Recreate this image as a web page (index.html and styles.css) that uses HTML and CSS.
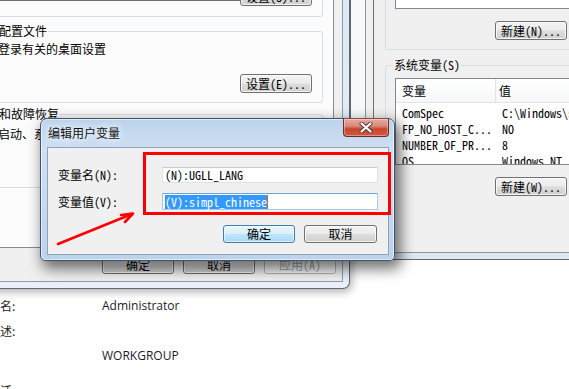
FILE: index.html
```html
<!DOCTYPE html>
<html lang="zh-CN">
<head>
<meta charset="utf-8">
<title>编辑用户变量</title>
<link rel="stylesheet" href="styles.css">
</head>
<body>
<div class="desk">

  <section class="syspage">
    <div class="info-row"><span class="info-label">名:</span><span class="info-val">Administrator</span></div>
    <div class="info-row"><span class="info-label">述:</span><span class="info-val"></span></div>
    <div class="info-row"><span class="info-label"></span><span class="info-val">WORKGROUP</span></div>
    <div class="info-row last"><span class="info-label">活</span><span class="info-val"></span></div>
  </section>

  <div class="win sysprops">
    <div class="sp-client">
      <div class="tabpage sim">
        <fieldset class="grp grp1">
          <div class="grp1-rule"></div>
          <div class="btn w72">设置(S)...</div>
        </fieldset>
        <fieldset class="grp grp2">
          <legend>用户配置文件</legend>
          <p class="grp-text">与您登录有关的桌面设置</p>
          <div class="btn w72 push-right">设置(E)...</div>
        </fieldset>
        <fieldset class="grp grp3">
          <legend>启动和故障恢复</legend>
          <p class="grp-text">系统启动、系统失败和调试信息</p>
        </fieldset>
      </div>
      <div class="sp-buttons sim">
        <div class="btn w72">确定</div>
        <div class="btn w72">取消</div>
        <div class="btn w72 disabled">应用(A)</div>
      </div>
    </div>
  </div>

  <div class="win envvars">
    <div class="ev-client sim">
      <fieldset class="grp ev-user">
        <div class="listbox user-list"></div>
        <div class="ev-buttons">
          <div class="btn w72">新建(N)...</div>
          <div class="btn w72">编辑(E)...</div>
          <div class="btn w72">删除(D)</div>
        </div>
      </fieldset>
      <fieldset class="grp ev-sys">
        <legend>系统变量(S)</legend>
        <div class="listbox sys-list">
          <div class="lv-head"><span class="col1">变量</span><span class="col2">值</span></div>
          <div class="lv-row"><span class="col1">ComSpec</span><span class="col2">C:\Windows\system32\cmd.exe</span></div>
          <div class="lv-row"><span class="col1">FP_NO_HOST_C...</span><span class="col2">NO</span></div>
          <div class="lv-row"><span class="col1">NUMBER_OF_PR...</span><span class="col2">8</span></div>
          <div class="lv-row"><span class="col1">OS</span><span class="col2">Windows_NT</span></div>
        </div>
        <div class="ev-buttons">
          <div class="btn w72">新建(W)...</div>
          <div class="btn w72">编辑(I)...</div>
          <div class="btn w72">删除(L)</div>
        </div>
      </fieldset>
    </div>
  </div>

  <div class="win editdlg">
    <div class="titlebar">
      <span class="title">编辑用户变量</span>
      <div class="closebtn">
        <svg width="14" height="11" viewBox="0 0 14 11" aria-hidden="true">
          <path d="M2.5 1.5 L11.5 9.5 M11.5 1.5 L2.5 9.5" stroke="#4a3a38" stroke-width="4" stroke-linecap="round" fill="none"/>
          <path d="M2.5 1.5 L11.5 9.5 M11.5 1.5 L2.5 9.5" stroke="#ffffff" stroke-width="2.2" stroke-linecap="round" fill="none"/>
        </svg>
      </div>
    </div>
    <div class="ed-client sim">
      <div class="field-row">
        <span class="field-label">变量名(N):</span>
        <div class="input">(N):UGLL_LANG</div>
      </div>
      <div class="field-row row2">
        <span class="field-label">变量值(V):</span>
        <div class="input focus"><span class="sel">(V):simpl_chinese</span><span class="caret"></span></div>
      </div>
      <div class="ed-buttons">
        <div class="btn w72 default">确定</div>
        <div class="btn w73">取消</div>
      </div>
    </div>
  </div>

  <div class="annot-box"></div>
  <svg class="annot-arrow" width="569" height="389" viewBox="0 0 569 389" aria-hidden="true">
    <path d="M58 244 L132 214" stroke="#ff0000" stroke-width="2.6" stroke-linecap="round" fill="none"/>
    <path d="M121 215 L133 213.5 L125 222" stroke="#ff0000" stroke-width="2.6" stroke-linecap="round" stroke-linejoin="round" fill="none"/>
  </svg>

</div>
</body>
</html>
```

FILE: styles.css
```css
* { box-sizing: border-box; }
html, body { margin: 0; padding: 0; }
body {
  width: 569px;
  height: 389px;
  overflow: hidden;
  background: #ffffff;
  font-family: "Noto Sans CJK SC", sans-serif;
  font-size: 12px;
  color: #000;
}
.desk {
  position: relative;
  width: 569px;
  height: 389px;
  overflow: hidden;
  background: #ffffff;
}
.sim {
  font-family: "Noto Sans Mono CJK SC", "Noto Sans CJK SC", monospace;
  font-size: 12px;
  line-height: 14px;
}
.win { position: absolute; }

/* ---------- buttons ---------- */
.btn {
  height: 19px;
  flex-shrink: 0;
  border: 1px solid #707070;
  border-radius: 3px;
  background: linear-gradient(#f3f3f3 0%, #ebebeb 48%, #dddddd 52%, #cfcfcf 100%);
  box-shadow: inset 0 0 0 1px rgba(255,255,255,0.75);
  display: flex;
  align-items: center;
  justify-content: center;
  white-space: nowrap;
  line-height: 14px;
}
.w72 { width: 72px; }
.w73 { width: 73px; }
.btn.default {
  border-color: #3c7fb1;
  background: linear-gradient(#eaf6fd 0%, #d9f0fc 48%, #bee6fd 52%, #a7d9f5 100%);
  box-shadow: inset 0 0 0 1px rgba(255,255,255,0.6);
}
.btn.disabled {
  color: #9c9c9c;
  border-color: #adb2b5;
  background: #f4f4f4;
}

/* ---------- group boxes ---------- */
.grp {
  margin: 0;
  min-width: 0;
  border: 1px solid #d5dfe5;
  border-radius: 3px;
  padding: 0 10px 0 7px;
  flex-shrink: 0;
}
.grp legend {
  padding: 0 1px;
  font-size: 12px;
  line-height: 14px;
  white-space: nowrap;
}
.grp-text {
  margin: 0;
  white-space: nowrap;
  line-height: 14px;
}
.push-right { margin-left: auto; }

/* ---------- bottom system page ---------- */
.syspage {
  position: absolute;
  left: 0;
  top: 289px;
  width: 569px;
  height: 100px;
  padding-top: 4px;
}
.info-row {
  display: flex;
  height: 25px;
  line-height: 25px;
  white-space: nowrap;
}
.info-row.last { margin-top: 10px; }
.info-label {
  width: 102px;
  flex-shrink: 0;
  font-family: "Noto Sans CJK SC", sans-serif;
  color: #1e1e1e;
}
.info-val {
  font-family: "Open Sans", "Noto Sans", sans-serif;
  color: #1a1a2a;
}

/* ---------- system properties dialog (behind) ---------- */
.sysprops {
  left: -60px;
  top: -30px;
  width: 410px;
  height: 319px;
  background: linear-gradient(#dde8f4, #e9f0f8);
  border: 1px solid #5d6672;
  border-top: 0;
  border-radius: 0 0 7px 7px;
  padding: 0 6px 6px 6px;
  box-shadow: 2px 3px 8px rgba(0,0,0,0.3);
  display: flex;
  flex-direction: column;
}
.sp-client {
  flex: 1;
  background: #f0f0f0;
  border: 1px solid #8c9cb0;
  padding: 0 8px 7px 8px;
  display: flex;
  flex-direction: column;
}
.tabpage {
  height: 277px;
  flex-shrink: 0;
  background: #fcfcfc;
  border: 1px solid #898c95;
  padding: 0 10px 0 9px;
  display: flex;
  flex-direction: column;
}
.grp1 {
  height: 45px;
}
.grp1-rule {
  margin-top: 27px;
  width: 274px;
  height: 1px;
  background: #6f6f6f;
}
.grp1 .btn {
  margin: -14px 0 0 auto;
}
.grp2 {
  margin-top: 7px;
  height: 79px;
}
.grp2 .grp-text { margin-top: 4px; }
.grp2 .btn { margin-top: 18px; }
.grp3 {
  margin-top: 4px;
  height: 81px;
}
.grp3 .grp-text { margin-top: 6px; }
.sp-buttons {
  display: flex;
  justify-content: flex-end;
  gap: 9px;
  margin-top: 7px;
  margin-right: -2px;
}

/* ---------- environment variables dialog ---------- */
.envvars {
  left: 350px;
  top: -20px;
  width: 410px;
  height: 280px;
  background: linear-gradient(to right, #f6f8fb 0, #f6f8fb 14px, #dfe7f0 14px);
  border: 1px solid #5d6672;
  border-top: 0;
  padding: 0 7px 6px 14px;
  display: flex;
}
.ev-client {
  flex: 1;
  background: linear-gradient(to right, #f0f0f0 0, #f0f0f0 7px, #6e6e6e 7px, #6e6e6e 8px, #f0f0f0 8px);
  border: 1px solid #8a96a3;
  padding: 0 11px 0 19px;
  display: flex;
  flex-direction: column;
}
.ev-user {
  height: 69px;
  padding: 0 10px 0 9px;
  border-top: 0;
  border-radius: 0 0 3px 3px;
}
.listbox {
  background: #ffffff;
  border: 1px solid #828790;
  flex-shrink: 0;
}
.user-list { height: 28px; }
.ev-buttons {
  display: flex;
  justify-content: flex-end;
  gap: 9px;
  margin-top: 12px;
}
.ev-sys {
  margin-top: 8px;
  flex: 1;
  padding: 0 10px 0 9px;
  border-bottom: 0;
  border-radius: 3px 3px 0 0;
}
.ev-sys legend { margin-left: -2px; }
.sys-list {
  margin-top: 6px;
  height: 87px;
  overflow: hidden;
}
.lv-head {
  display: flex;
  height: 24px;
  align-items: center;
  background: linear-gradient(#ffffff, #f6f7f9);
  border-bottom: 1px solid #e2e4e8;
  margin-bottom: 2px;
}
.lv-head .col1 { border-right: 1px solid #e3e3e3; height: 24px; display: flex; align-items: center; }
.lv-head .col2 { padding-left: 3px; }
.lv-row {
  display: flex;
  height: 16px;
  align-items: center;
  white-space: nowrap;
}
.col1 { width: 100px; padding-left: 6px; flex-shrink: 0; }
.col2 { padding-left: 6px; white-space: nowrap; }

/* ---------- edit user variable dialog (front) ---------- */
.editdlg {
  left: 40px;
  top: 118px;
  width: 355px;
  height: 143px;
  border: 1px solid #42536b;
  border-radius: 7px 7px 5px 5px;
  background: linear-gradient(#bcd3ec 0%, #cfe0f3 22%, #c6daf0 60%, #bcd3ec 100%);
  box-shadow: inset 0 0 0 1px rgba(255,255,255,0.55), 4px 6px 14px 2px rgba(0,0,0,0.55);
  padding: 0 5px 5px 6px;
  display: flex;
  flex-direction: column;
}
.titlebar {
  height: 28px;
  flex-shrink: 0;
  display: flex;
  align-items: flex-start;
  padding-left: 1px;
}
.title {
  margin-top: 7px;
  line-height: 14px;
  font-size: 12px;
  color: #111;
  text-shadow: 0 0 6px #ffffff, 0 0 10px rgba(255,255,255,0.9);
  white-space: nowrap;
}
.closebtn {
  margin-left: auto;
  margin-top: -1px;
  width: 46px;
  height: 19px;
  border: 1px solid #6b2e26;
  border-top-color: #8a4b42;
  border-radius: 0 0 4px 4px;
  background: linear-gradient(#eaa99f 0%, #d9877a 42%, #c8452f 58%, #d2593f 100%);
  box-shadow: inset 0 0 0 1px rgba(255,255,255,0.35);
  display: flex;
  align-items: center;
  justify-content: center;
}
.ed-client {
  flex: 1;
  background: #f0f0f0;
  border: 1px solid #8da2bb;
  padding: 19px 10px 0 10px;
  display: flex;
  flex-direction: column;
}
.field-row {
  display: flex;
  align-items: center;
  height: 16px;
}
.field-row.row2 {
  margin-top: 10px;
  height: 17px;
}
.field-label {
  width: 104px;
  flex-shrink: 0;
  white-space: nowrap;
}
.input {
  width: 216px;
  height: 100%;
  background: #ffffff;
  border: 1px solid #dde1e7;
  border-top-color: #c6cbd3;
  padding-left: 2px;
  display: flex;
  align-items: center;
  white-space: nowrap;
}
.input.focus {
  border-color: #a9cbe9;
  border-top-color: #6fa3d6;
}
.sel {
  background: #3399ff;
  color: #ffffff;
  line-height: 14px;
}
.caret {
  width: 1px;
  height: 14px;
  background: #c86a10;
}
.ed-buttons {
  display: flex;
  justify-content: flex-end;
  gap: 9px;
  margin-top: 15px;
  margin-right: 1px;
}
.ed-buttons .btn { height: 18px; }

/* ---------- red annotation ---------- */
.annot-box {
  position: absolute;
  left: 143px;
  top: 152px;
  width: 248px;
  height: 63px;
  border: 3px solid #ff0000;
}
.annot-arrow {
  position: absolute;
  left: 0;
  top: 0;
}
```
